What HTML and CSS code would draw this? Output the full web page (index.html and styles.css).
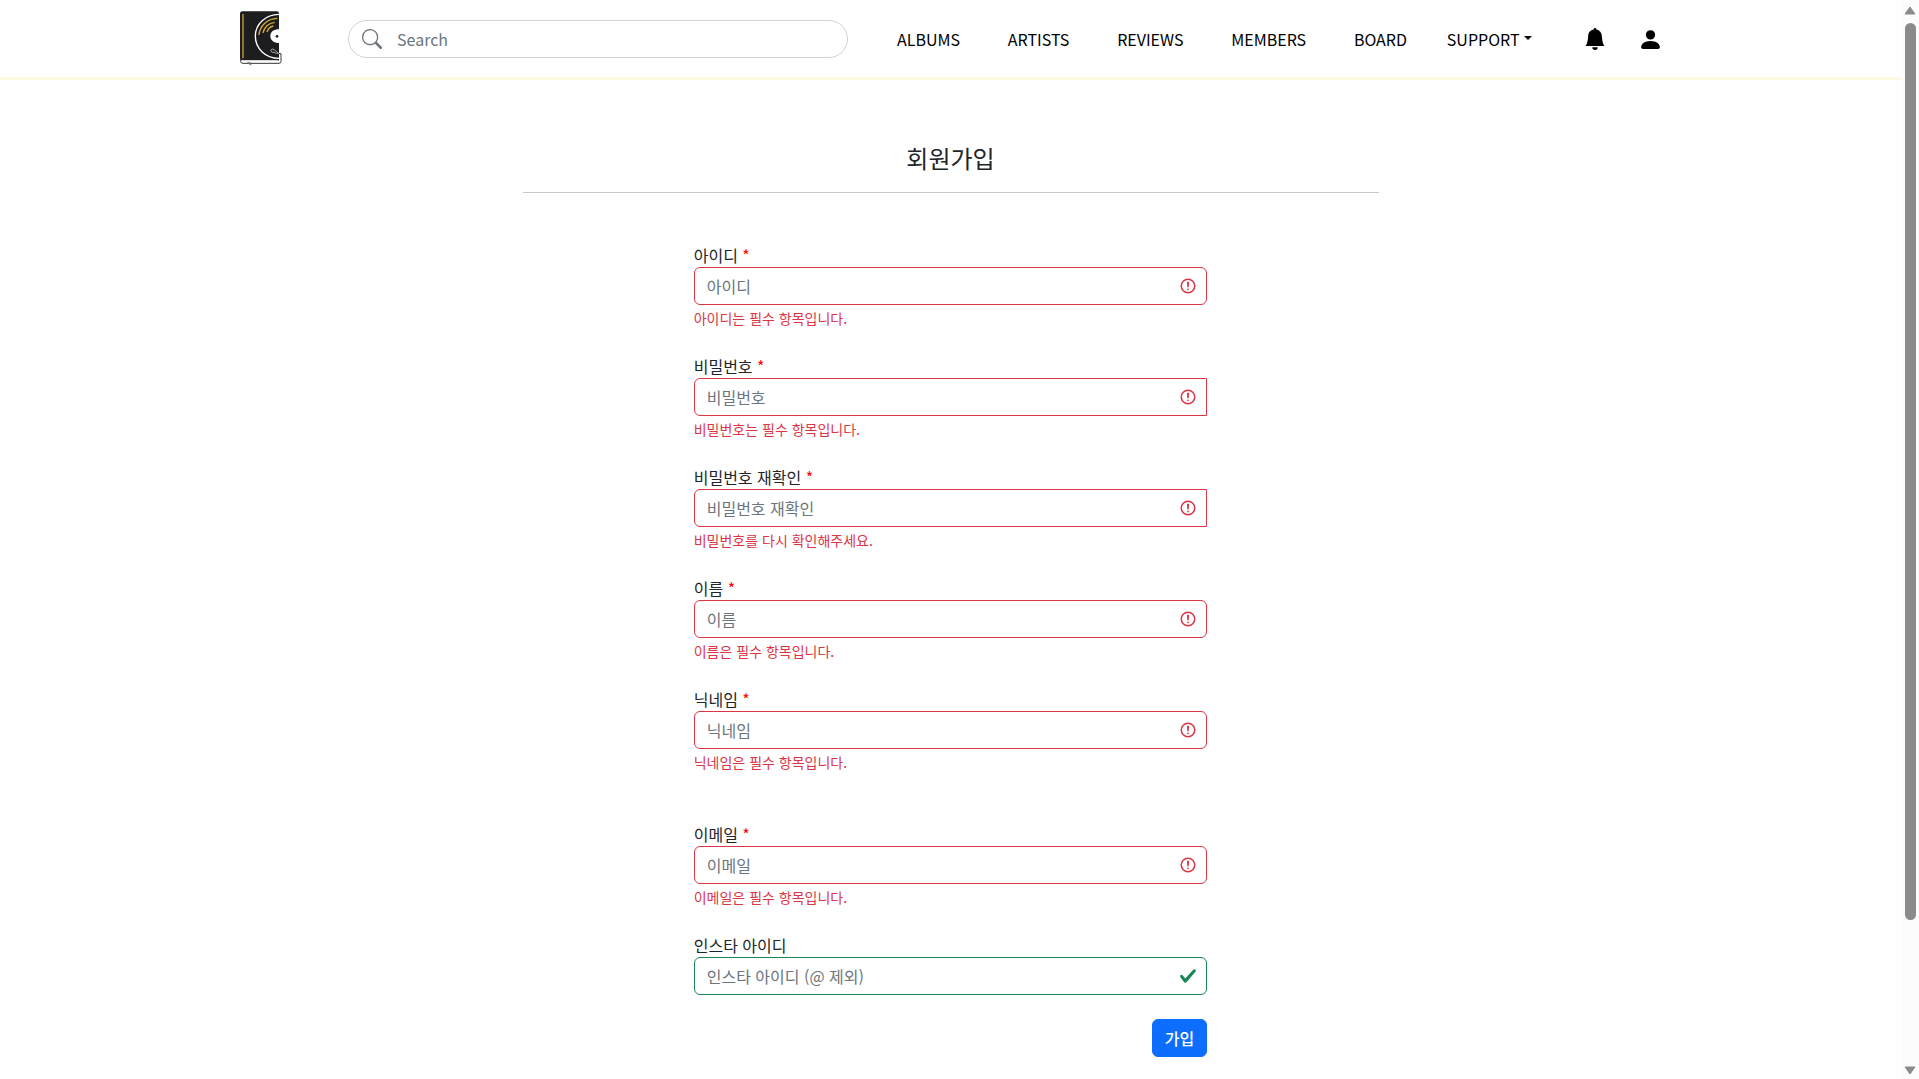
FILE: index.html
```html
<!DOCTYPE html>
<html lang="ko">
<head>
<meta charset="utf-8">
<title>회원가입</title>
<link rel="stylesheet" href="styles.css">
</head>
<body>
<svg class="defs" aria-hidden="true">
  <symbol id="invalid" viewBox="0 0 12 12"><circle cx="6" cy="6" r="4.5" fill="none" stroke="#dc3545"/><path d="M5.8 3.6h.4L6 6.5z" fill="#dc3545" stroke="#dc3545" stroke-linejoin="round"/><circle cx="6" cy="8.2" r=".6" fill="#dc3545"/></symbol>
  <symbol id="valid" viewBox="0 0 8 8"><path fill="#198754" d="M2.3 6.73.6 4.53c-.4-1.04.46-1.4 1.1-.8l1.1 1.4 3.4-3.8c.6-.63 1.6-.27 1.2.7l-4 4.6c-.43.5-.8.4-1.1.1z"/></symbol>
</svg>
<div class="page">
  <header class="header">
    <a class="logo" href="#">
      <svg width="44" height="56" viewBox="56 30 132 168">
        <path d="M66 34H170Q176 34 176 41V182H66Q59 182 59 175V42Q59 34 66 34Z" fill="#1d1d1f"/>
        <path d="M61 176V184Q61 190 68 190H176Q182 190 182 184V161H176" fill="none" stroke="#38383b" stroke-width="3"/>
        <path d="M64 183H174" stroke="#fff" stroke-width="4"/>
        <path d="M68 42V175" stroke="#c9a02c" stroke-width="4"/>
        <path d="M176 43C136 43 105 72 105 108C105 146 136 175 176 175" fill="none" stroke="#fff" stroke-width="4"/>
        <path d="M116 105C118 78 140 56 171 55M128 99C131 82 145 69 163 67M140 96C143 87 150 80 159 78" fill="none" stroke="#d7ab2e" stroke-width="4"/>
        <path d="M177 88C160 88 150 96 150 108C150 121 160 129 177 129Z" fill="#fff"/>
        <circle cx="170" cy="109" r="4" fill="#1d1d1f"/>
        <path d="M151 151Q155 144 161 149L168 154 175 160M151 151Q153 159 161 157L168 160 175 160" fill="none" stroke="#eee" stroke-width="2"/>
        <path d="M81 187L90 188 86 192 94 195" fill="none" stroke="#888" stroke-width="3"/>
      </svg>
    </a>
    <label class="search">
      <svg width="20" height="20" viewBox="0 0 16 16" fill="currentColor"><path d="M11.742 10.344a6.500 6.500 0 1 0-1.397 1.398h-.001c.03.04.062.078.098.115l3.850 3.850a1 1 0 0 0 1.415-1.414l-3.850-3.850a1.007 1.007 0 0 0-.115-.1zM12 6.500a5.500 5.500 0 1 1-11 0 5.500 5.500 0 0 1 11 0z"/></svg>
      <input class="search-input" type="text" placeholder="Search">
    </label>
    <nav class="nav">
      <a href="#">ALBUMS</a><a href="#">ARTISTS</a><a href="#">REVIEWS</a><a href="#">MEMBERS</a><a href="#">BOARD</a><a class="dropdown" href="#">SUPPORT</a>
    </nav>
    <a class="bell" href="#"><svg width="22" height="22" viewBox="0 0 16 16"><path d="M8 16a2 2 0 0 0 2-2H6a2 2 0 0 0 2 2zm.995-14.901a1 1 0 1 0-1.990 0A5.002 5.002 0 0 0 3 6c0 1.098-.5 6-2 7h14c-1.500-1-2-5.902-2-7 0-2.420-1.720-4.440-4.005-4.901z"/></svg></a>
    <a class="person" href="#"><svg width="25" height="25" viewBox="0 0 16 16"><path d="M3 14s-1 0-1-1 1-4 6-4 6 3 6 4-1 1-1 1H3zm5-6a3 3 0 1 0 0-6 3 3 0 0 0 0 6z"/></svg></a>
  </header>
  <main class="main">
    <h4 class="title">회원가입</h4>
    <hr class="rule">
    <form class="form">
      <div class="field"><label>아이디 <span class="req">*</span></label><div class="control"><input type="text" placeholder="아이디"><svg class="mark"><use href="#invalid"/></svg></div><p class="feedback">아이디는 필수 항목입니다.</p></div>
      <div class="field"><label>비밀번호 <span class="req">*</span></label><div class="control"><input class="square" type="password" placeholder="비밀번호"><svg class="mark"><use href="#invalid"/></svg></div><p class="feedback">비밀번호는 필수 항목입니다.</p></div>
      <div class="field"><label>비밀번호 재확인 <span class="req">*</span></label><div class="control"><input class="square" type="password" placeholder="비밀번호 재확인"><svg class="mark"><use href="#invalid"/></svg></div><p class="feedback">비밀번호를 다시 확인해주세요.</p></div>
      <div class="field"><label>이름 <span class="req">*</span></label><div class="control"><input type="text" placeholder="이름"><svg class="mark"><use href="#invalid"/></svg></div><p class="feedback">이름은 필수 항목입니다.</p></div>
      <div class="field field-spaced"><label>닉네임 <span class="req">*</span></label><div class="control"><input type="text" placeholder="닉네임"><svg class="mark"><use href="#invalid"/></svg></div><p class="feedback">닉네임은 필수 항목입니다.</p></div>
      <div class="field"><label>이메일 <span class="req">*</span></label><div class="control"><input type="text" placeholder="이메일"><svg class="mark"><use href="#invalid"/></svg></div><p class="feedback">이메일은 필수 항목입니다.</p></div>
      <div class="field"><label>인스타 아이디</label><div class="control"><input class="valid" type="text" placeholder="인스타 아이디 (@ 제외)"><svg class="mark"><use href="#valid"/></svg></div></div>
      <button class="submit" type="button">가입</button>
    </form>
  </main>
</div>
<div class="scrollbar">
  <svg width="12" height="9" viewBox="0 0 12 9"><path d="M6 1L11 8H1Z"/></svg>
  <div class="thumb"></div>
  <svg width="12" height="9" viewBox="0 0 12 9"><path d="M6 8L11 1H1Z"/></svg>
</div>
</body>
</html>
```
FILE: styles.css
```css
* { box-sizing: border-box; }
body {
  margin: 0;
  height: 1079px;
  overflow: hidden;
  display: grid;
  grid-template-columns: 1fr 18px;
  font: 400 16px/24px "Noto Sans CJK KR", sans-serif;
  color: #212529;
  background: #fff;
}
svg { display: block; }
a { color: #000; text-decoration: none; }
input, button { font: inherit; }
.defs { position: absolute; width: 0; height: 0; }
.page { min-width: 0; }

.header {
  display: flex;
  align-items: center;
  height: 80px;
  padding-left: 239px;
  border-bottom: 3px solid #fff8e1;
}
.logo { width: 44px; margin: 0 65px 2px 0; }
.search {
  display: flex;
  align-items: center;
  gap: 15px;
  width: 500px;
  height: 38px;
  margin-right: 49px;
  padding-left: 13px;
  border: 1px solid #ced4da;
  border-radius: 19px;
  color: #6c757d;
}
.search-input { flex: 1; min-width: 0; border: 0; padding: 0; outline: 0; background: none; }
input::placeholder { color: #6c757d; opacity: 1; }
.nav { display: flex; gap: 47.8px; padding-top: 1px; }
.dropdown { display: flex; align-items: center; gap: 4px; margin-left: -8px; }
.dropdown::after { content: ""; border: 4.8px solid transparent; border-top-color: #000; border-bottom: 0; margin-top: -2px; }
.bell { margin-left: 52px; }
.person { margin: 1px 0 0 32px; }

.main { width: 856px; margin: 0 auto; padding-top: 63px; }
.title { margin: 0; font-size: 24px; font-weight: 400; line-height: 29px; text-align: center; }
.rule { margin: 20px 0 50px; border: 0; border-top: 1px solid #c8c9c9; }
.form { width: 60%; margin: 0 auto; }
.field { margin-bottom: 24px; }
.field-spaced { margin-bottom: 48px; }
.field label { display: block; height: 24px; }
.req { color: #f00; }
.control { position: relative; height: 38px; }
.control input {
  display: block;
  width: 100%;
  height: 38px;
  padding: 6px 36px 6px 12px;
  border: 1px solid #dc3545;
  border-radius: 6px;
  background: #fff;
}
.control input.square { border-radius: 6px 0 0 6px; }
.control input.valid { border-color: #198754; }
.mark { position: absolute; top: 10px; right: 10px; width: 18px; height: 18px; }
.feedback { margin: 3px 0 0; padding-bottom: 1px; font-size: 14px; line-height: 21px; color: #dc3545; }
.submit {
  display: block;
  height: 38px;
  margin-left: auto;
  padding: 6px 12px;
  border: 1px solid #0d6efd;
  border-radius: 6px;
  background: #0d6efd;
  color: #fff;
  font-weight: 500;
}

.scrollbar {
  display: flex;
  flex-direction: column;
  align-items: center;
  padding: 6px 0 4px;
  background: #fcfcfc;
}
.scrollbar path { fill: #8b8b8b; stroke: #8b8b8b; stroke-linejoin: round; }
.thumb { width: 11px; height: 897px; margin: 8px 0 auto; border-radius: 6px; background: #8b8b8b; }
```
